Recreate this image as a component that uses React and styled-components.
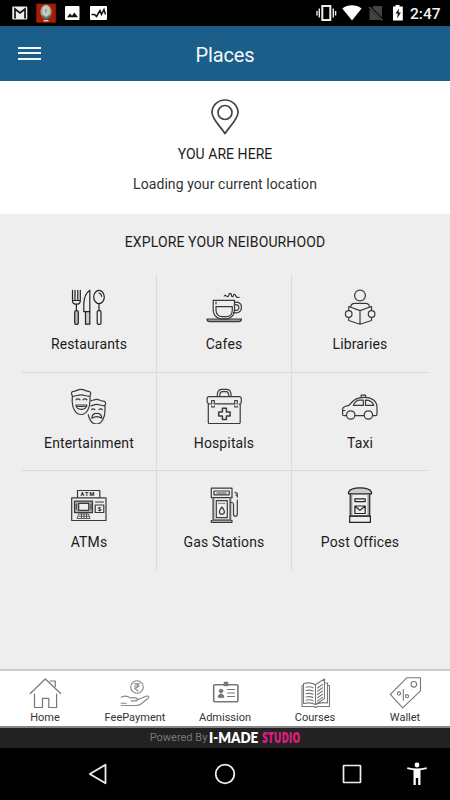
import React from 'react';
import styled, { createGlobalStyle } from 'styled-components';

const GlobalStyle = createGlobalStyle`
  * {
    box-sizing: border-box;
  }

  body {
    margin: 0;
    background-color: #000;
    font-family: Roboto, Arial, sans-serif;
  }
`;

const Screen = styled.div`
  display: flex;
  flex-direction: column;
  width: 450px;
  height: 800px;
  overflow: hidden;
`;

const StatusBar = styled.div`
  display: flex;
  justify-content: space-between;
  height: 26px;
  padding: 0 9px 0 12px;
  background-color: #000;
`;

const StatusGroup = styled.div`
  display: flex;
  align-items: center;
`;

const Clock = styled.span`
  width: 31px;
  margin-left: 7px;
  color: #f2f2f2;
  font-size: 15.5px;
  font-weight: 500;
  line-height: 26px;
  padding-top: 1px;
  white-space: nowrap;
`;

const Header = styled.header`
  display: grid;
  grid-template-columns: 60px 1fr 60px;
  align-items: center;
  height: 55px;
  background-color: #1b5e89;
`;

const MenuButton = styled.button`
  display: flex;
  flex-direction: column;
  gap: 3.5px;
  width: 23px;
  margin: -1px 0 0 18px;
  padding: 0;
  border: none;
  background: none;
`;

const MenuBar = styled.span`
  height: 2px;
  background-color: #f2f6f9;
`;

const Title = styled.h1`
  margin: 2px 0 0;
  color: #f4f8fb;
  font-size: 20px;
  font-weight: 400;
  letter-spacing: -0.1px;
  text-align: center;
`;

const Location = styled.section`
  display: flex;
  flex-direction: column;
  align-items: center;
  height: 133px;
  padding-top: 18px;
  background-color: #fff;
`;

const LocationTitle = styled.h2`
  margin: 10px 0 0;
  color: #1c1c1c;
  font-size: 14px;
  font-weight: 400;
  line-height: 18px;
  letter-spacing: 0.05px;
`;

const LocationText = styled.p`
  margin: 12px 0 0;
  color: #333;
  font-size: 14px;
  line-height: 18px;
  letter-spacing: 0.08px;
`;

const Explore = styled.section`
  flex: 1;
  padding: 19px 22px 0;
  background-color: #eee;
`;

const ExploreTitle = styled.h2`
  margin: 0 0 23px;
  color: #1c1c1c;
  font-size: 14px;
  font-weight: 400;
  line-height: 18px;
  letter-spacing: 0.12px;
  text-align: center;
`;

const Grid = styled.div`
  display: grid;
  grid-template-columns: 135px 135px 136px;
  grid-template-rows: 99px 98px 99px;
`;

const Cell = styled.div`
  display: flex;
  flex-direction: column;
  align-items: center;
  padding-top: ${({ $last }) => ($last ? '16px' : '15px')};
  border-right: ${({ $edge }) => ($edge ? 'none' : '1px solid #dcdcdc')};
  border-bottom: ${({ $last }) => ($last ? 'none' : '1px solid #dadada')};
`;

const CellLabel = styled.span`
  margin-top: 10px;
  color: #1c1c1c;
  font-size: 14px;
  line-height: 18px;
  letter-spacing: 0.13px;
`;

const TabBar = styled.nav`
  display: grid;
  grid-template-columns: repeat(5, 1fr);
  height: 59px;
  border-top: 2px solid #cdcdcd;
  border-bottom: 2px solid #82868a;
  background-color: #fff;
`;

const Tab = styled.div`
  display: flex;
  flex-direction: column;
  align-items: center;
  padding-top: 4px;
`;

const TabLabel = styled.span`
  color: #333;
  font-size: 11px;
  line-height: 13px;
`;

const Powered = styled.footer`
  display: flex;
  align-items: center;
  justify-content: center;
  height: 20px;
  padding-bottom: 2px;
  background-color: #222;
  color: #777;
  font-size: 11px;
  white-space: nowrap;
`;

const Brand = styled.span`
  display: flex;
  gap: 3px;
  margin-left: 2px;
  font-weight: 800;
`;

const BrandWord = styled.span`
  display: inline-block;
  width: ${({ $width }) => $width};
  color: ${({ $color }) => $color};
  font-family: ${({ $font }) => $font};
  font-size: 15.5px;
  line-height: 18px;
  transform: scaleX(${({ $scale }) => $scale});
  transform-origin: left center;
`;

const NavBar = styled.div`
  display: grid;
  grid-template-columns: 70px 56px 198px 56px 70px;
  align-items: center;
  justify-items: center;
  height: 52px;
  background-color: #000;
`;

const NavSpacer = styled.span`
  width: 70px;
`;

const AccessIcon = styled.svg`
  display: block;
  margin-left: 4px;
  fill: #fff;
`;

const Svg = styled.svg`
  display: block;
  flex: none;
  fill: none;
  stroke: ${({ $color }) => $color || '#3a3a3a'};
  stroke-width: ${({ $weight }) => $weight || 1.2};
  stroke-linejoin: round;
  stroke-linecap: round;
`;

const AtmText = styled.text`
  fill: #333;
  stroke: none;
  font-size: 5.5px;
  font-weight: 900;
  letter-spacing: 1px;
`;

const TinyText = styled.text`
  fill: #333;
  stroke: none;
  font-family: 'DejaVu Sans', sans-serif;
  font-size: 6px;
  font-weight: 700;
  text-anchor: middle;
`;

const Icon = ({ children, color, weight }) => (
  <Svg width="36" height="36" viewBox="0 0 36 36" $color={color} $weight={weight}>
    {children}
  </Svg>
);

const places = [
  {
    name: 'Restaurants',
    icon: (
      <Icon color="#222">
        <path d="M1.500 1.300v10c0 2.700 1.500 3.800 3 3.800h1.800c1.800 0 3-1.200 3-3.800v-10M4 1.300v9.500M6.800 1.300v9.500M1.500 11.500h7.800M5.400 15v6.500" />
        <rect x="3.700" y="21.700" width="3.600" height="13.600" rx="1.400" fill="#bbb" />
        <path d="M18.800 1.200v21.500h-6v-8c.2-5.500 2.200-11 6-13.500z" />
        <path d="M14.500 22.700h4.300v12.500h-4.300z" fill="#ccc" />
        <ellipse cx="28" cy="8" rx="5.300" ry="6.700" />
        <path d="M28 4c1.700.4 2.500 1.700 2.700 3.300M28 14.800v6.700" />
        <rect x="26.200" y="21.700" width="3.800" height="13.600" rx="1.400" />
      </Icon>
    ),
  },
  {
    name: 'Cafes',
    icon: (
      <Icon>
        <path d="M1 30h34.500c0 2-1 2.700-2.500 2.700H3.500C2 32.700 1 32 1 30z" fill="#999" />
        <path d="M7.200 11.300h21.300v9.500c0 5-3.300 8-7 9h-7.300c-4-1-7-4-7-9z" />
        <path d="M10 17.700h16.300v3c0 4.500-2.500 7-6 7h-4.300c-3.500 0-6-2.500-6-7zM10 13v2" />
        <path d="M28.500 13.300c4-.8 7 1.200 7 5.200s-3.500 6-8 5.200M28.500 15.800c2.500-.4 4.400.4 4.400 2.700s-2 3.200-4.400 2.900" />
        <path d="M18.200 7c1.300-2 2.700 1.500 4 .5 1.500-1.200-.2-3 2-3.200 2.300 0 .2 3.800 2.500 3.300 1.500-.4 0-2.600 1.800-2.300 2.300.5.500 4.300 4.700 3" />
      </Icon>
    ),
  },
  {
    name: 'Libraries',
    icon: (
      <Icon>
        <circle cx="18" cy="6.500" r="5.400" />
        <path d="M6.700 21.500v-4L18 21.600l11.500-4.100v4M6.700 28.500v3L18 35.200l11.500-3.700v-3M18 21.600v13.500" />
        <path d="M8.800 17.500c.3-2 1.500-3.100 3.500-3.100h11.500c2 0 3.300 1.100 3.500 3.100" />
        <circle cx="6.700" cy="25" r="3.300" />
        <circle cx="29.600" cy="25" r="3.300" />
      </Icon>
    ),
  },
  {
    name: 'Entertainment',
    icon: (
      <Icon>
        <path d="M1.300 7.500C0 5.500.3 3.300 2.500 3.300c2.800 0 4-2 7.500-2s4.700 2 7.500 2c2.300 0 2.700 2.200 1.500 4.200v5c0 7.500-3.200 14-8.800 14C4.500 26.500.5 19.500 1.300 11z" />
        <path d="M2 8.300c3.500 0 4.500-1.500 8-1.500s4.500 1.500 8.300 1.500" />
        <path d="M5 11.800c1-1.300 3-1.300 4 0M12 11.800c1-1.300 3-1.300 4 0M4.900 17h11c-.6 5.300-10 6.300-11 0zM6.500 18.500h7.500" />
        <path d="M20 12.800c2.300-.3 3-1.500 5.500-1.500 3.200 0 4 1.900 7 1.900 2.300 0 2.500 2.500 1.500 4v5c0 7-3 14-8.500 14-4 0-7-4-8.300-9.500M20 17.800c2-.2 3-1.500 5.500-1.500 3 0 4.500 1.500 8 1.500" />
        <path d="M20.500 21.500c1-.8 2.500-.8 3.300 0M28 21.500c1-.8 2.500-.8 3.300 0M20.800 30.200c.2-6.500 9.700-6.500 10 0-3-2-7-2-10 0z" />
      </Icon>
    ),
  },
  {
    name: 'Hospitals',
    icon: (
      <Icon>
        <path d="M5 16H2.300V34.200c0 1 .5 1.500 1.400 1.500h29c1 0 1.500-.5 1.500-1.500V16M2.500 15.800C1.200 15 1.100 14.500 1.100 13v-2.500C1.100 9.300 2 8.600 3.300 8.600h29.500c1.500 0 2.500.7 2.500 2v4c0 1-.7 1.500-2 1.500M9.200 15.900h19.500" />
        <path d="M11.200 8.300c0-4 1.500-7 4.300-7h5.400c2.800 0 4.300 3 4.300 7M13.600 8.300c.2-3 1.100-4.700 2.800-4.700h3.700c1.700 0 2.600 1.700 2.800 4.700" />
        <path d="M5.700 16v-3.500h2.600V16M5.700 18v1h2.600v-1M28.700 16v-3.500h2.600V16M28.700 18v1h2.600v-1" />
        <path d="M16.400 20.200h4v3.700h3.700v4h-3.700v3.700h-4v-3.700h-3.700v-4h3.700z" strokeWidth="1.500" />
      </Icon>
    ),
  },
  {
    name: 'Taxi',
    icon: (
      <Icon>
        <path d="M4.400 27.700H2c-.9 0-1.400-.7-1.400-1.500v-5c0-2 1.500-3 6.400-3.900 2-2 3.500-4 5.500-5.300 3-2.500 6.500-2.700 10-2.700 6.500 0 12.500 3 12.500 10v7c0 1-.5 1.400-1.500 1.400h-2.700M13 27.700h9" />
        <circle cx="8.700" cy="27" r="4.200" />
        <circle cx="26.400" cy="27" r="4.200" />
        <path d="M19.200 9V7.100h4.400V9M11.300 17.400c1.200-3 3.200-5.300 6.500-5.300h3.500v5.300zM23.500 12.100c4.300 0 7.200 1.800 8.300 5.300h-8.300zM1 22.500h2" />
      </Icon>
    ),
  },
  {
    name: 'ATMs',
    icon: (
      <Icon>
        <path d="M.7 10.800h34.300v22.700H.7zM6.500 10.800V3.500h22.300v7.300" />
        <AtmText x="9.500" y="9.200">ATM</AtmText>
        <rect x="3.500" y="14.200" width="18" height="11.500" fill="#aaa" />
        <rect x="7.700" y="16.300" width="10" height="7" fill="#eee" />
        <path d="M8 27h9.500l1.500 4.500H6.400zM8 29.300h10M10.500 27v4M13 27v4M15.500 27v4" strokeWidth=".8" />
        <path d="M24.500 15h8M24.200 18h8.600v7.500h-8.600z" />
        <path d="M5.200 17v6M20 17v6" strokeDasharray="1 1" />
        <TinyText x="28.500" y="24">$</TinyText>
      </Icon>
    ),
  },
  {
    name: 'Gas Stations',
    icon: (
      <Icon>
        <path d="M5.300 1.200H26v9.500H5.300zM5.300 35.300v-1.800H26v1.800z" />
        <path d="M7.300 10.800v22.500h17V10.800" stroke="#666" strokeWidth="2" />
        <path d="M8 4h15.200v3.800H8zM10.300 13.700h11v17h-11z" />
        <path d="M11 6h9" strokeDasharray="1 1" />
        <path d="M12.500 16.300h6.500" strokeWidth=".7" strokeDasharray="1 1" />
        <path d="M15.900 20c1.600 2.300 2.500 3.500 2.500 4.700a2.500 2.500 0 0 1-5 0c0-1.200.9-2.400 2.500-4.700z" />
        <path d="M25 15.500h1c1.400 0 1.500.7 1.500 2V27c0 3 3.800 3 3.800 0V13M29 5.300l2.300 1.200v3.500M31.300 8h-1.500" />
      </Icon>
    ),
  },
  {
    name: 'Post Offices',
    icon: (
      <Icon color="#222">
        <path d="M6.500 5.200C9-.5 27-.5 29.500 5.200v1.600h-23z" fill="#ccc" />
        <path d="M8.200 7v22h19.500V7" />
        <path d="M9.700 8v21M26.200 8v21" stroke="#888" />
        <path d="M7.700 29.200h20.700v6.200H7.700z" />
        <path d="M12.900 11.800h10.300v2.800H12.900z" />
        <path d="M12.900 19h10.300v7.500H12.900zM13 19.200l5 4.200 5-4.200" />
      </Icon>
    ),
  },
];

const tabs = [
  {
    name: 'Home',
    icon: (
      <Icon color="#777">
        <path d="M3.300 18.500L18.300 4l15.400 14.500M23 6h5.300v5.500M7.500 19v13.500h8V23.300h6.300v9.200h7.800V19" />
      </Icon>
    ),
  },
  {
    name: 'FeePayment',
    icon: (
      <Icon color="#888" weight="1.100">
        <circle cx="20" cy="12" r="6.300" />
        <path d="M17.500 8.700h5M17.500 11h5M17.500 8.700c5 0 5 4.300 0 4.300l3.500 3" />
        <path d="M4.200 22.200c4-2 6.500-1.300 9 .7h5c3 0 3 3 0 3h-4M20 25l9-3.700c2.500-1 3.800.5 1.800 2.200L24 29c-1.500 1.200-3 1.500-5 1.500H4.200" />
        <path d="M4.200 28.300h5" />
      </Icon>
    ),
  },
  {
    name: 'Admission',
    icon: (
      <Icon color="#777" weight="1.600">
        <rect x="6.700" y="9.700" width="24.200" height="17" rx="1" />
        <path d="M17.500 7.500h3v3h-3z" fill="#777" />
        <circle cx="14" cy="16" r="1.800" fill="#777" strokeWidth="1" />
        <path d="M11.200 22c0-4 5.600-4 5.600 0z" fill="#777" strokeWidth="1" />
        <path d="M20.500 14.500h7M20.500 18h7M20.500 21.500h7" strokeWidth="1.100" />
      </Icon>
    ),
  },
  {
    name: 'Courses',
    icon: (
      <Icon color="#777" weight="1.100">
        <path d="M18.500 29.500c-3.500-2-7.500-2-12-1V8.500c5-1.200 8.500-1 12 1.200zM18.500 9.500l9-5.500v19.500l-9 6M27.500 8h3v20c-4-.7-8-.5-12 1.500" />
        <path d="M6.500 10.500H5v21h12c1 1 2.500 1 3.500 0h12v-21h-2" />
        <path d="M9 12.200c2.500-.6 5-.5 7 .5M9 15.500c2.500-.6 5-.5 7 .5M9 18.800c2.500-.6 5-.5 7 .5M9 22c2.500-.6 5-.5 7 .5M9 25.200c2.500-.6 5-.5 7 .5M20.500 13l5-3.500M20.500 16.200l5-3.500M20.500 19.500l5-3.500M20.500 22.700l5-3.500M20.500 25.900l5-3.500" />
      </Icon>
    ),
  },
  {
    name: 'Wallet',
    icon: (
      <Icon color="#777" weight="1.100">
        <path d="M3.300 19.300L19.700 2.800h13.800v13L15.700 32.800z" />
        <circle cx="26.800" cy="9.300" r="2.800" />
        <circle cx="12" cy="18.500" r="1.600" />
        <circle cx="20" cy="21.200" r="1.600" />
        <path d="M16.300 14.500v10.800" />
      </Icon>
    ),
  },
];

const Notifications = () => (
  <StatusGroup>
    <svg width="96" height="26" viewBox="12 0 96 26">
      <rect x="12.300" y="6.500" width="15" height="13" rx="1" fill="#eee" />
      <path d="M15 18.500V9l5 4 5-4v9.500" fill="none" stroke="#111" strokeWidth="1.700" />
      <path d="M36.300 3.700h19.500v19H36.300z" fill="#a61c08" />
      <ellipse cx="46" cy="11.700" rx="5.600" ry="7" fill="#aaa36f" />
      <ellipse cx="46" cy="11" rx="3.900" ry="5.400" fill="#b8cdd1" />
      <path d="M42 15.500c2 3 6 3 8 0" fill="none" stroke="#368083" strokeWidth="1.600" />
      <path d="M45 9h2v3.500h-2z" fill="#cc8f85" />
      <path d="M43.500 20.700h5" stroke="#e5c8bd" strokeWidth="1.500" />
      <rect x="65" y="6" width="14.500" height="14" rx="1" fill="#fff" />
      <path d="M67 17.300l3-3.800 2 2.200 2.300-3.200 3.700 4.800z" fill="#111" />
      <rect x="90" y="6" width="17" height="14" rx="1" fill="#fff" />
      <path d="M91.500 14.500h3l2 2 3.500-6 1.500 4 2.500-5 1.500 5" fill="none" stroke="#111" strokeWidth="1.500" />
    </svg>
  </StatusGroup>
);

const SystemStatus = () => (
  <StatusGroup>
    <svg width="88" height="26" viewBox="315 0 88 26">
      <path d="M322.300 6h8v14h-8z" fill="none" stroke="#eee" strokeWidth="2" />
      <path d="M319.300 8.500v9M317 11v4.500M333.300 8.500v9M335.600 11v4.500" stroke="#eee" strokeWidth="1.400" />
      <path d="M342.300 8.500c5.500-4.300 13.800-4.300 19.300 0L352 20.500z" fill="#fff" />
      <path d="M374 6h8v14h-12.500V10z" fill="#444" />
      <path d="M369 6.500l14 14" stroke="#000" strokeWidth="2.500" />
      <path d="M369 7l13.500 13.500" stroke="#555" strokeWidth="1.200" />
      <path d="M395.500 5h4v1.500h3.300v14h-9.800v-14h2.500z" fill="#fff" />
      <path d="M399 8.500l-3.500 5h2.300l-.6 5 3.700-6h-2.300z" fill="#111" />
    </svg>
    <Clock>2:47</Clock>
  </StatusGroup>
);

const App = () => {
  return (
    <>
      <GlobalStyle />
      <Screen>
        <StatusBar>
          <Notifications />
          <SystemStatus />
        </StatusBar>

        <Header>
          <MenuButton aria-label="Menu">
            <MenuBar />
            <MenuBar />
            <MenuBar />
          </MenuButton>
          <Title>Places</Title>
        </Header>

        <Location>
          <Svg width="28" height="36" viewBox="0 0 28 36" $color="#444" $weight="1.700">
            <path d="M14 34.700C11 29 1 20.500 1 13.500a13 12.500 0 0 1 26 0c0 7-10 15.500-13 21.200z" />
            <circle cx="14" cy="13.500" r="7" />
          </Svg>
          <LocationTitle>YOU ARE HERE</LocationTitle>
          <LocationText>Loading your current location</LocationText>
        </Location>

        <Explore>
          <ExploreTitle>EXPLORE YOUR NEIBOURHOOD</ExploreTitle>
          <Grid>
            {places.map((place, index) => (
              <Cell key={place.name} $edge={index % 3 === 2} $last={index > 5}>
                {place.icon}
                <CellLabel>{place.name}</CellLabel>
              </Cell>
            ))}
          </Grid>
        </Explore>

        <TabBar>
          {tabs.map((tab) => (
            <Tab key={tab.name}>
              {tab.icon}
              <TabLabel>{tab.name}</TabLabel>
            </Tab>
          ))}
        </TabBar>

        <Powered>
          Powered By
          <Brand>
            <BrandWord $width="50px" $color="#fff" $font="Lato, sans-serif" $scale={0.86}>I-MADE</BrandWord>
            <BrandWord $width="38px" $color="#d81f7b" $font="'Open Sans', sans-serif" $scale={0.65}>STUDIO</BrandWord>
          </Brand>
        </Powered>

        <NavBar>
          <NavSpacer />
          <Svg width="20" height="22" viewBox="0 0 20 22" $color="#eee" $weight="1.800">
            <path d="M17.500 1.800v18.500L1.800 11z" />
          </Svg>
          <Svg width="22" height="22" viewBox="0 0 22 22" $color="#eee" $weight="1.800">
            <circle cx="11" cy="11" r="9.300" />
          </Svg>
          <Svg width="20" height="20" viewBox="0 0 20 20" $color="#eee" $weight="1.700">
            <rect x="1.500" y="1.500" width="17" height="17" rx=".5" />
          </Svg>
          <AccessIcon width="20" height="24" viewBox="0 0 20 24">
            <circle cx="10" cy="3" r="2.400" />
            <path d="M.5 5.200c6 1.700 13 1.700 19 0l.4 1.800-6.400 1.200V23h-2.300v-7H8.800v7H6.500V8.200L.1 7z" />
          </AccessIcon>
        </NavBar>
      </Screen>
    </>
  );
};

export default App;
